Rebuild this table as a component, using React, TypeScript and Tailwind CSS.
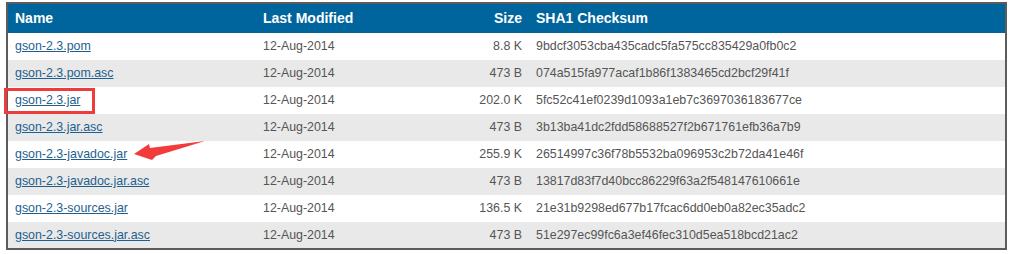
import React from "react"

const files = [
  { name: "gson-2.3.pom", size: "8.8 K", sha: "9bdcf3053cba435cadc5fa575cc835429a0fb0c2" },
  { name: "gson-2.3.pom.asc", size: "473 B", sha: "074a515fa977acaf1b86f1383465cd2bcf29f41f" },
  { name: "gson-2.3.jar", size: "202.0 K", sha: "5fc52c41ef0239d1093a1eb7c3697036183677ce" },
  { name: "gson-2.3.jar.asc", size: "473 B", sha: "3b13ba41dc2fdd58688527f2b671761efb36a7b9" },
  { name: "gson-2.3-javadoc.jar", size: "255.9 K", sha: "26514997c36f78b5532ba096953c2b72da41e46f" },
  { name: "gson-2.3-javadoc.jar.asc", size: "473 B", sha: "13817d83f7d40bcc86229f63a2f548147610661e" },
  { name: "gson-2.3-sources.jar", size: "136.5 K", sha: "21e31b9298ed677b17fcac6dd0eb0a82ec35adc2" },
  { name: "gson-2.3-sources.jar.asc", size: "473 B", sha: "51e297ec99fc6a3ef46fec310d5ea518bcd21ac2" },
]

export default function App() {
  return (
    <div className="relative w-[1009px] h-[254px] bg-white font-['Liberation_Sans',Arial,sans-serif] overflow-hidden">
      <div className="ml-[6px] mt-[2px] w-[1001px] border-2 border-[#5c5c5c]">
        {/* Header */}
        <div className="flex h-[29px] items-center bg-[#00659c] text-[14px] font-bold text-white">
          <div className="w-[248px] pl-[7px]">Name</div>
          <div className="w-[180px] pl-[7px]">Last Modified</div>
          <div className="w-[93px] pr-[7px] text-right">Size</div>
          <div className="flex-1 pl-[7px]">SHA1 Checksum</div>
        </div>

        {/* Rows */}
        {files.map((f, i) => (
          <div
            key={f.name}
            className={
              "flex items-center text-[12.4px] text-[#555555] " +
              (i === files.length - 1 ? "h-[26px] " : "h-[27px] ") +
              (i % 2 === 1 ? "bg-[#e9e9e9]" : "bg-white")
            }
          >
            <div className="w-[248px] pl-[7px]">
              <a href="#" className="text-[#1f5f8f] underline underline-offset-1">
                {f.name}
              </a>
            </div>
            <div className="w-[180px] pl-[7px]">12-Aug-2014</div>
            <div className="w-[93px] pr-[7px] text-right">{f.size}</div>
            <div className="flex-1 pl-[7px]">{f.sha}</div>
          </div>
        ))}
      </div>

      {/* Annotation: box round gson-2.3.jar */}
      <div className="absolute left-[4px] top-[88px] w-[91px] h-[26px] border-[3px] border-[#ee3b3b]" />

      {/* Annotation: arrow pointing at javadoc jar */}
      <svg className="absolute left-0 top-0" width="1009" height="254" viewBox="0 0 1009 254">
        <polygon
          points="134,154 149,144 150,148 205,141 156,156 152,160"
          fill="#f23c3c"
        />
      </svg>
    </div>
  )
}
